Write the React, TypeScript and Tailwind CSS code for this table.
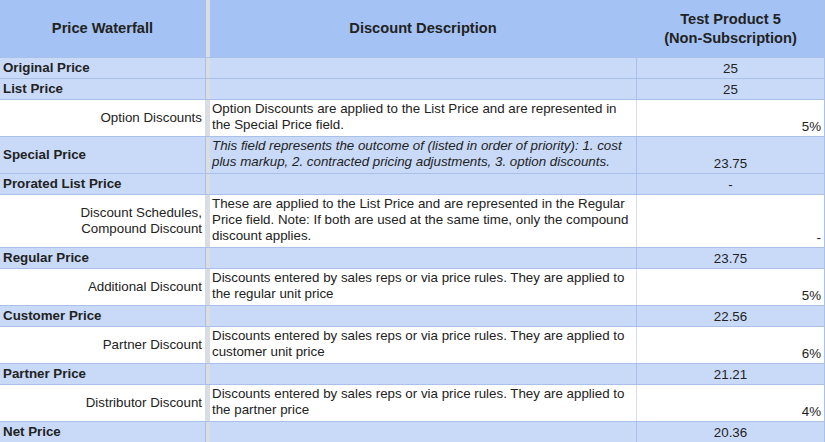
import React from "react";

type Row = {
  label: string;
  kind: "price" | "discount";
  desc?: string;
  italic?: boolean;
  value: string;
  lines: number;
};

const rows: Row[] = [
  { label: "Original Price", kind: "price", value: "25", lines: 1 },
  { label: "List Price", kind: "price", value: "25", lines: 1 },
  {
    label: "Option Discounts",
    kind: "discount",
    desc: "Option Discounts are applied to the List Price and are represented in the Special Price field.",
    value: "5%",
    lines: 2,
  },
  {
    label: "Special Price",
    kind: "price",
    desc: "This field represents the outcome of (listed in order of priority): 1. cost plus markup, 2. contracted pricing adjustments, 3. option discounts.",
    italic: true,
    value: "23.75",
    lines: 2,
  },
  { label: "Prorated List Price", kind: "price", value: "-", lines: 1 },
  {
    label: "Discount Schedules, Compound Discount",
    kind: "discount",
    desc: "These are applied to the List Price and are represented in the Regular Price field. Note: If both are used at the same time, only the compound discount applies.",
    value: "-",
    lines: 3,
  },
  { label: "Regular Price", kind: "price", value: "23.75", lines: 1 },
  {
    label: "Additional Discount",
    kind: "discount",
    desc: "Discounts entered by sales reps or via price rules. They are applied to the regular unit price",
    value: "5%",
    lines: 2,
  },
  { label: "Customer Price", kind: "price", value: "22.56", lines: 1 },
  {
    label: "Partner Discount",
    kind: "discount",
    desc: "Discounts entered by sales reps or via price rules. They are applied to customer unit price",
    value: "6%",
    lines: 2,
  },
  { label: "Partner Price", kind: "price", value: "21.21", lines: 1 },
  {
    label: "Distributor Discount",
    kind: "discount",
    desc: "Discounts entered by sales reps or via price rules. They are applied to the partner price",
    value: "4%",
    lines: 2,
  },
  { label: "Net Price", kind: "price", value: "20.36", lines: 1 },
];

const heights: Record<number, string> = {
  1: "h-[21px]",
  2: "h-[37px]",
  3: "h-[53px]",
};

function WaterfallRow({ row }: { row: Row }) {
  const isPrice = row.kind === "price";
  const bg = isPrice ? "bg-[#c9daf8]" : "bg-white";
  const line = isPrice ? "border-[#a9c0e8]" : "border-[#d6dde9]";
  return (
    <div className={`flex ${heights[row.lines]} border-b border-[#a9c0e8] ${bg}`}>
      <div
        className={`w-[206px] shrink-0 flex items-center px-[3px] border-r ${line} ${
          isPrice ? "font-bold justify-start" : "justify-end text-right"
        }`}
      >
        <span className={row.lines === 1 ? "" : "w-full"}>
          {row.label === "Discount Schedules, Compound Discount" ? (
            <>
              Discount Schedules,
              <br />
              Compound Discount
            </>
          ) : (
            row.label
          )}
        </span>
      </div>
      <div className="w-[4px] shrink-0 bg-[#dadde2]" />
      <div className={`w-[427px] shrink-0 px-[2px] pt-[1px] border-r ${line} ${row.italic ? "italic" : ""}`}>
        {row.desc}
      </div>
      <div
        className={`flex-1 flex items-end px-[3px] pb-[1px] border-r border-[#a9c0e8] ${
          isPrice ? "justify-center" : "justify-end"
        }`}
      >
        {row.value}
      </div>
    </div>
  );
}

export default function App() {
  return (
    <div className="w-[825px] h-[442px] overflow-hidden bg-white text-[13.33px] leading-[16px] text-[#222222] font-['Liberation_Sans',Arial,sans-serif]">
      <div className="flex h-[58px] bg-[#a4c2f4] border-b border-[#a9c0e8] font-bold text-[14.67px] leading-[19px]">
        <div className="w-[206px] shrink-0 flex items-center justify-center border-r border-[#a9c0e8]">
          Price Waterfall
        </div>
        <div className="w-[4px] shrink-0 bg-[#dadde2]" />
        <div className="w-[427px] shrink-0 flex items-center justify-center border-r border-[#a9c0e8]">
          Discount Description
        </div>
        <div className="flex-1 flex items-center justify-center text-center border-r border-[#a9c0e8]">
          Test Product 5
          <br />
          (Non-Subscription)
        </div>
      </div>
      {rows.map((row, i) => (
        <WaterfallRow key={i} row={row} />
      ))}
    </div>
  );
}
